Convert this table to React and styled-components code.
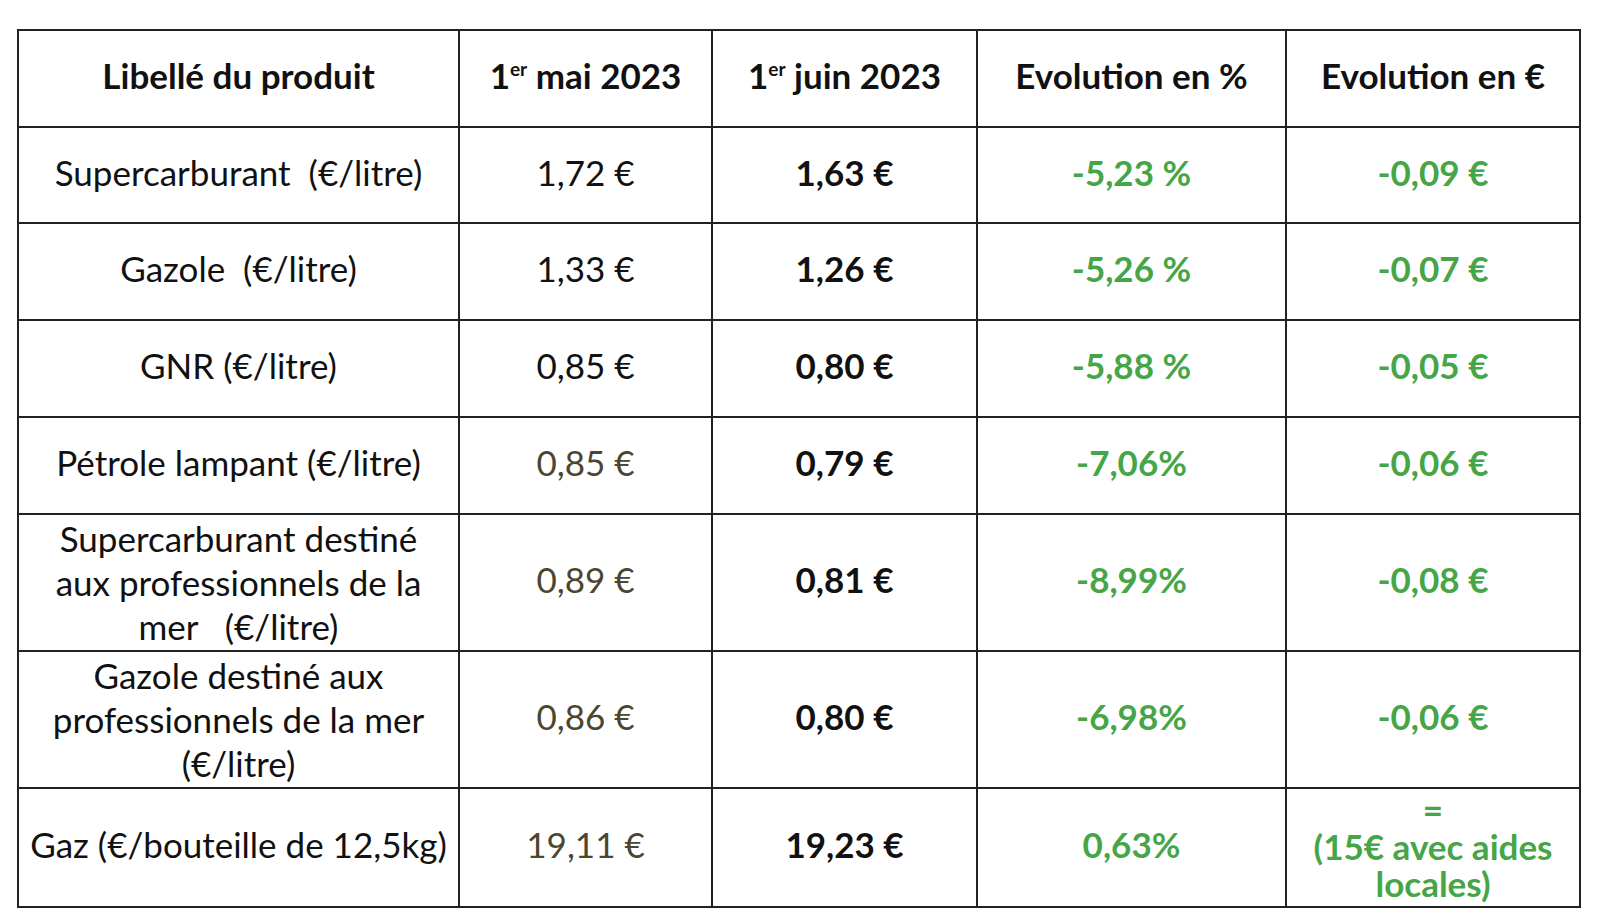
import React from 'react';
import styled, { createGlobalStyle } from 'styled-components';

const GlobalStyle = createGlobalStyle`
  html, body {
    margin: 0;
    background: #ffffff;
  }
  body {
    font-family: Lato, "Open Sans", sans-serif;
    color: #111;
  }
`;

const rows = [
  { label: 'Supercarburant\u00a0 (€/litre)', may: '1,72 €', june: '1,63 €', pct: '-5,23 %', eur: '-0,09 €', h: 96 },
  { label: 'Gazole\u00a0 (€/litre)', may: '1,33 €', june: '1,26 €', pct: '-5,26 %', eur: '-0,07 €', h: 97 },
  { label: 'GNR (€/litre)', may: '0,85 €', june: '0,80 €', pct: '-5,88 %', eur: '-0,05 €', h: 97 },
  { label: 'Pétrole lampant (€/litre)', may: '0,85 €', june: '0,79 €', pct: '-7,06%', eur: '-0,06 €', olive: true, h: 97 },
  { label: ['Supercarburant destiné', 'aux professionnels de la', 'mer \u00a0 (€/litre)'], may: '0,89 €', june: '0,81 €', pct: '-8,99%', eur: '-0,08 €', olive: true, h: 137 },
  { label: ['Gazole destiné aux', 'professionnels de la mer', '(€/litre)'], may: '0,86 €', june: '0,80 €', pct: '-6,98%', eur: '-0,06 €', olive: true, h: 137 },
  { label: 'Gaz (€/bouteille de 12,5kg)', may: '19,11 €', june: '19,23 €', pct: '0,63%', eur: ['=', '(15€ avec aides', 'locales)'], olive: true, h: 119 },
];

const Page = styled.div`
  padding: 29px 21px 19px 17px;
`;

const Table = styled.table`
  width: 1562px;
  border-collapse: collapse;
  table-layout: fixed;
  border: 2px solid #222;
`;

const Col = styled.col`
  width: ${p => p.w}px;
`;

const HeadCell = styled.th`
  height: 87px;
  border: 2px solid #222;
  font-size: 35px;
  font-weight: 700;
  text-align: center;
  vertical-align: middle;
  padding: 0 0 8px;
  color: #111;
  white-space: nowrap;

  sup {
    font-size: 19px;
    vertical-align: 13px;
    line-height: 0;
  }
`;

const Cell = styled.td`
  border: 2px solid #222;
  text-align: center;
  vertical-align: middle;
  padding: 0 0 ${p => (p.multi ? 2 : 7)}px;
  font-size: 35px;
  line-height: ${p => (p.tight ? 37 : 44)}px;
  font-weight: ${p => (p.bold ? 700 : 400)};
  color: ${p => (p.green ? '#46a546' : p.olive ? '#4a4630' : '#111')};
`;

const Line = styled.div`
  white-space: nowrap;
`;

const Row = styled.tr`
  height: ${p => p.h}px;
`;

const Lines = ({ text }) =>
  Array.isArray(text) ? text.map((t, i) => <Line key={i}>{t}</Line>) : text;

const App = () => (
  <Page>
    <GlobalStyle />
    <Table>
      <colgroup>
        <Col w={441} />
        <Col w={253} />
        <Col w={265} />
        <Col w={309} />
        <Col w={294} />
      </colgroup>
      <thead>
        <tr>
          <HeadCell>Libellé du produit</HeadCell>
          <HeadCell>1<sup>er</sup> mai 2023</HeadCell>
          <HeadCell>1<sup>er</sup> juin 2023</HeadCell>
          <HeadCell>Evolution en %</HeadCell>
          <HeadCell>Evolution en €</HeadCell>
        </tr>
      </thead>
      <tbody>
        {rows.map((r, i) => (
          <Row key={i} h={r.h}>
            <Cell multi={Array.isArray(r.label)}><Lines text={r.label} /></Cell>
            <Cell olive={r.olive}>{r.may}</Cell>
            <Cell bold>{r.june}</Cell>
            <Cell bold green>{r.pct}</Cell>
            <Cell bold green tight={Array.isArray(r.eur)} multi={Array.isArray(r.eur)}>
              <Lines text={r.eur} />
            </Cell>
          </Row>
        ))}
      </tbody>
    </Table>
  </Page>
);

export default App;
